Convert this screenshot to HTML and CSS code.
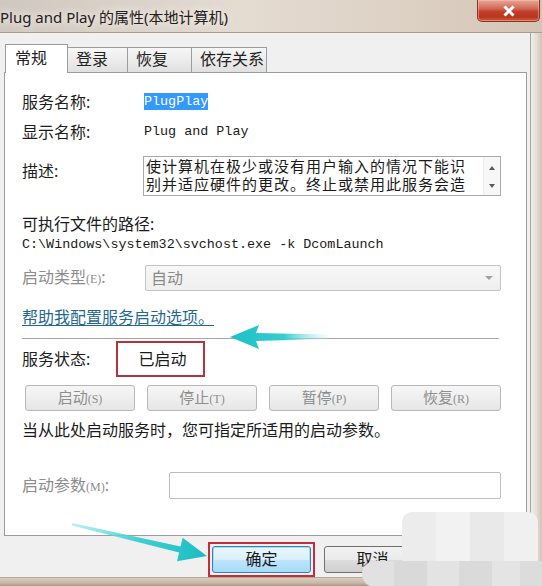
FILE: index.html
```html
<!DOCTYPE html>
<html>
<head>
<meta charset="utf-8">
<link rel="stylesheet" href="styles.css">
</head>
<body>
<div class="window">
  <div class="titlebar">
    <div class="title">Plug and Play 的属性(本地计算机)</div>
    <div class="close"><svg width="14" height="12" viewBox="0 0 14 12"><path d="M2.5 1.5 L11.5 10.5 M11.5 1.5 L2.5 10.5" stroke="#ffffff" stroke-width="3"/></svg></div>
  </div>
  <div class="main">
    <div class="dialog">
      <div class="tabs">
        <div class="tab active t1">常规</div>
        <div class="tab t2">登录</div>
        <div class="tab t3">恢复</div>
        <div class="tab t4">依存关系</div>
      </div>
      <div class="page">
        <div class="row r-name"><span class="label">服务名称:</span><span class="mono"><span class="sel">PlugPlay</span></span></div>
        <div class="row r-display"><span class="label">显示名称:</span><span class="mono">Plug and Play</span></div>
        <div class="row r-desc">
          <span class="label desc-label">描述:</span>
          <div class="textbox">
            <div class="text"><div class="tline">使计算机在极少或没有用户输入的情况下能识</div><div class="tline">别并适应硬件的更改。终止或禁用此服务会造</div></div>
            <div class="vscroll"><span class="tri up"></span><span class="tri down"></span></div>
          </div>
        </div>
        <div class="path-label">可执行文件的路径:</div>
        <div class="path mono">C:\Windows\system32\svchost.exe -k DcomLaunch</div>
        <div class="row r-type"><span class="label dis">启动类型<span class="small">(E)</span>:</span><div class="select"><span>自动</span><span class="caret"></span></div></div>
        <div class="help-row"><a class="help">帮助我配置服务启动选项。</a></div>
        <div class="sep"></div>
        <div class="row r-status"><span class="label">服务状态:</span><span class="status">已启动</span></div>
        <div class="btnrow">
          <div class="btn">启动<span class="small">(S)</span></div>
          <div class="btn">停止<span class="small">(T)</span></div>
          <div class="btn">暂停<span class="small">(P)</span></div>
          <div class="btn">恢复<span class="small">(R)</span></div>
        </div>
        <div class="hint">当从此处启动服务时，您可指定所适用的启动参数。</div>
        <div class="row r-param"><span class="label dis">启动参数<span class="small">(M)</span>:</span><div class="input"></div></div>
      </div>
      <div class="footer">
        <div class="mark"><div class="fbtn ok">确定</div></div>
        <div class="fbtn">取消</div>
        <div class="fbtn">应用<span class="small">(A)</span></div>
      </div>
    </div>
    <div class="frame-right"></div>
  </div>
  <div class="frame-bottom"></div>

  <svg class="overlay" width="542" height="586" viewBox="0 0 542 586">
    <defs>
      <linearGradient id="g1" x1="230" y1="0" x2="328" y2="0" gradientUnits="userSpaceOnUse">
        <stop offset="0" stop-color="#1cbfc5"/>
        <stop offset="0.55" stop-color="#36cdd0"/>
        <stop offset="1" stop-color="#bdf0f0" stop-opacity="0.2"/>
      </linearGradient>
      <linearGradient id="g2" x1="72" y1="524" x2="207" y2="556" gradientUnits="userSpaceOnUse">
        <stop offset="0" stop-color="#8fe4e4" stop-opacity="0.6"/>
        <stop offset="0.5" stop-color="#3fcfd2"/>
        <stop offset="1" stop-color="#1bbcc2"/>
      </linearGradient>
    </defs>
    <polygon points="230,337 259,325 256,333 328,334.5 328,339 256,341 259,349" fill="url(#g1)"/>
    <polygon points="72.2,523 180.5,546.6 182.6,537.8 207,556 177,561.2 179.1,552.4 71.8,525.5" fill="url(#g2)"/>
  </svg>
  <div class="wm-top"></div>
  <div class="wm-bottom"></div>
</div>
</body>
</html>
```
FILE: styles.css
```css
* { box-sizing: border-box; margin: 0; padding: 0; }
html, body { width: 542px; height: 586px; overflow: hidden; }
body {
  font-family: "Noto Sans", "Noto Sans CJK SC", sans-serif;
  color: #1b1b1b;
  background: #d6cabd;
}
.window {
  position: relative;
  width: 542px;
  height: 586px;
  display: flex;
  flex-direction: column;
  background: linear-gradient(90deg, #d0c8c0 0%, #e4dbd1 45%, #ddd1c4 75%, #d3c5b6 100%);
}
.titlebar {
  height: 33px;
  flex: none;
  display: flex;
  justify-content: space-between;
  align-items: flex-start;
  border-bottom: 1px solid #a89c90;
}
.title {
  margin-left: 0;
  padding-top: 6px;
  font-size: 15px;
  line-height: 22px;
  color: #202020;
  font-family: "Noto Sans", "Noto Sans CJK SC", sans-serif;
  text-shadow: 0 0 6px #f4eee8, 0 0 10px #f4eee8;
  white-space: nowrap;
}
.close {
  width: 63px;
  height: 22px;
  margin-right: 2px;
  border: 1px solid #8a3325;
  border-top: none;
  border-radius: 0 0 5px 5px;
  background: linear-gradient(180deg, #e7a898 0%, #d26a55 40%, #c2402a 55%, #b8351f 80%, #cf5a3e 100%);
  display: flex;
  align-items: center;
  justify-content: center;
  box-shadow: inset 0 0 0 1px rgba(255,200,190,0.45);
}
.main {
  flex: 1;
  display: flex;
}
.dialog {
  width: 531px;
  flex: none;
  background: #f0f0f0;
  padding: 11px 3px 0 4px;
  border-right: 1px solid #a3a3a3;
  display: flex;
  flex-direction: column;
}
.frame-right {
  flex: 1;
  background: linear-gradient(90deg, #f2eeea 0%, #e6ddd3 50%, #d2c3b4 100%);
}
.frame-bottom {
  height: 9px;
  flex: none;
  background: linear-gradient(180deg, #d9cdbf 0%, #c9b9a7 60%, #a89784 100%);
  border-top: 1px solid #b5a898;
}

/* tabs */
.tabs {
  display: flex;
  align-items: flex-end;
  height: 28px;
  padding-left: 1px;
  position: relative;
  z-index: 1;
}
.tab {
  height: 25px;
  border: 1px solid #9c9c9c;
  border-bottom: none;
  border-left: none;
  background: linear-gradient(180deg, #f7f7f7 0%, #ececec 50%, #e0e0e0 100%);
  font-size: 16px;
  line-height: 22px;
  padding-left: 8px;
  color: #222;
  white-space: nowrap;
}
.tab.active {
  height: 29px;
  margin-bottom: -1px;
  background: #ffffff;
  border-left: 1px solid #9c9c9c;
  padding-left: 9px;
  line-height: 26px;
}
.t1 { width: 63px; }
.t2 { width: 60px; }
.t3 { width: 64px; }
.t4 { width: 75px; }

/* page */
.page {
  height: 464px;
  flex: none;
  background: #ffffff;
  border: 1px solid #9c9c9c;
  padding: 0 25px 0 17px;
  display: flex;
  flex-direction: column;
}
.row {
  display: grid;
  grid-template-columns: 122px 1fr;
  align-items: center;
}
.label {
  font-size: 16px;
  line-height: 20px;
  white-space: nowrap;
  color: #1e1e1e;
}
.label.dis { color: #8d8d8d; }
.small { font-size: 12px; font-family: "Liberation Serif", serif; }
.mono {
  font-family: "Liberation Mono", monospace;
  font-size: 13.4px;
  line-height: 18px;
  color: #1a1a1a;
  white-space: nowrap;
}
.sel {
  background: #3399ff;
  color: #ffffff;
  padding: 1px 0 1px 0;
}
.r-name { height: 20px; margin-top: 19px; }
.r-display { height: 20px; margin-top: 10px; }
.r-desc { height: 40px; margin-top: 14px; grid-template-columns: 121px 1fr; align-items: start; }
.desc-label { padding-top: 5px; }
.textbox {
  height: 40px;
  border: 1px solid #a9a9a9;
  display: flex;
  background: #ffffff;
}
.text {
  flex: 1;
  padding: 0 0 0 2px;
  display: flex;
  flex-direction: column;
}
.tline {
  height: 18px;
  font-size: 15px;
  line-height: 18px;
  letter-spacing: 1px;
  font-family: "Noto Sans CJK SC", sans-serif;
  color: #1a1a1a;
  white-space: nowrap;
}
.vscroll {
  width: 17px;
  background: #f7f7f7;
  border-left: 1px solid #ececec;
  display: flex;
  flex-direction: column;
  align-items: center;
  justify-content: space-between;
  padding: 9px 0 7px;
}
.tri { width: 0; height: 0; border-left: 3.5px solid transparent; border-right: 3.5px solid transparent; }
.tri.up { border-bottom: 4px solid #5a5a5a; }
.tri.down { border-top: 4px solid #5a5a5a; }

.path-label { height: 19px; margin-top: 19px; font-size: 16px; line-height: 19px; }
.path { height: 18px; margin-top: 2px; }

.r-type { height: 26px; margin-top: 11px; grid-template-columns: 123px 1fr; }
.select {
  height: 26px;
  border: 1px solid #c4c4c4;
  border-radius: 2px;
  background: linear-gradient(180deg, #f7f7f7, #efefef);
  color: #8a8a8a;
  font-size: 16px;
  line-height: 24px;
  padding: 0 7px 0 5px;
  display: flex;
  justify-content: space-between;
  align-items: center;
}
.caret {
  width: 0; height: 0;
  border-left: 4px solid transparent;
  border-right: 4px solid transparent;
  border-top: 4px solid #a0a0a0;
}
.help-row { height: 20px; margin-top: 15px; }
.help {
  font-size: 16px;
  line-height: 20px;
  color: #1f6a8e;
  text-decoration: underline;
  text-underline-offset: 2px;
  white-space: nowrap;
}
.sep { height: 1px; margin-top: 12px; background: #a6a6a6; margin-right: 2px; }

.r-status { height: 36px; margin-top: 2px; grid-template-columns: 94px 89px; }
.status {
  height: 36px;
  border: 2px solid #b3343c;
  font-size: 16px;
  line-height: 32px;
  text-align: center;
  padding-left: 4px;
}
.btnrow {
  height: 24px;
  margin-top: 8px;
  margin-left: 3px;
  display: grid;
  grid-template-columns: repeat(4, 1fr);
  column-gap: 12px;
}
.btn {
  border: 1px solid #b8b8b8;
  border-radius: 3px;
  background: linear-gradient(180deg, #f6f6f6 0%, #efefef 50%, #e6e6e6 100%);
  color: #8e8e8e;
  font-size: 15px;
  line-height: 22px;
  text-align: center;
  white-space: nowrap;
}
.hint { height: 20px; margin-top: 11px; font-size: 16px; line-height: 20px; white-space: nowrap; }
.r-param { height: 27px; margin-top: 32px; grid-template-columns: 147px 1fr; }
.input { height: 27px; border: 1px solid #bdbdbd; border-radius: 2px; background: #fff; }

/* footer */
.footer {
  display: flex;
  align-items: flex-start;
  padding-top: 6px;
  gap: 9px;
}
.mark {
  margin-left: 204px;
  border: 2px solid #c22f3a;
  padding: 2px;
}
.fbtn {
  width: 99px;
  height: 27px;
  border: 1px solid #707070;
  border-radius: 3px;
  background: linear-gradient(180deg, #f2f2f2 0%, #ebebeb 50%, #dddddd 51%, #cfcfcf 100%);
  font-size: 16px;
  line-height: 25px;
  text-align: center;
  color: #1a1a1a;
}
.footer > .fbtn { margin-top: 4px; }
.fbtn.ok {
  border-color: #3c7fb1;
  background: linear-gradient(180deg, #eaf6fd 0%, #d9f0fc 50%, #bee6fd 51%, #a7d9f5 100%);
  box-shadow: inset 0 0 0 1px #9fe0f8;
}

/* overlays */
.overlay { position: absolute; left: 0; top: 0; pointer-events: none; }
.wm-top {
  position: absolute;
  left: 402px; top: 512px;
  width: 136px; height: 52px;
  border-radius: 10px 10px 0 0;
  background:
    linear-gradient(90deg, #ececec 0 25%, #f2f2f2 25% 50%, #e9e9e9 50% 75%, #f0f0f0 75% 100%);
}
.wm-bottom {
  position: absolute;
  left: 362px; top: 561px;
  width: 180px; height: 26px;
  border-radius: 13px 0 0 13px;
  background:
    linear-gradient(90deg, #e1e1e1 0 18%, #d9d9d9 18% 36%, #e3e3e3 36% 54%, #dadada 54% 72%, #e4e4e4 72% 88%, #dcdcdc 88% 100%);
}
```
